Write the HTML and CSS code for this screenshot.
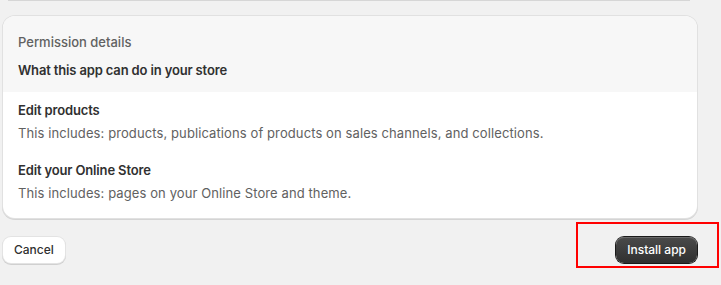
FILE: index.html
```html
<!DOCTYPE html>
<html lang="en">
<head>
    <meta charset="UTF-8">
    <meta name="viewport" content="width=device-width, initial-scale=1.0">
    <title>Install app</title>
    <link rel="stylesheet" href="styles.css">
</head>
<body>
  <div class="page">
    <div class="prev-card"></div>

    <section class="card">
      <header class="card-head">
        <p class="eyebrow">Permission details</p>
        <h2>What this app can do in your store</h2>
      </header>
      <div class="card-body">
        <div class="perm">
          <h3>Edit products</h3>
          <p>This includes: products, publications of products on sales channels, and collections.</p>
        </div>
        <div class="perm">
          <h3>Edit your Online Store</h3>
          <p>This includes: pages on your Online Store and theme.</p>
        </div>
      </div>
    </section>

    <div class="actions">
      <button class="btn">Cancel</button>
      <button class="btn btn-primary">Install app</button>
      <span class="highlight"></span>
    </div>
  </div>
</body>
</html>
```

FILE: styles.css
```css
html, body {
    margin: 0;
    background: #f1f1f1;
}

body {
    font-family: Inter, "Noto Sans", sans-serif;
    font-size: 13px;
    line-height: 20px;
    color: #303030;
    min-height: 285px;
}

.page {
    padding: 0 24px 22px 3px;
}

.prev-card {
    height: 1px;
    margin: 0 7px 0 5px;
    background: #d6d6d6;
}

.card {
    margin-top: 15px;
    background: #fff;
    border-radius: 12px;
    overflow: hidden;
    box-shadow: 0 0 0 1px #e1e1e1, 0 1px 0 1px #d4d4d4;
}

.card-head {
    background: #f7f7f7;
    padding: 16px 15px 12px;
}

.eyebrow {
    margin: 0 0 8px;
    color: #616161;
    font-weight: 500;
}

h2, h3 {
    margin: 0;
    font-size: 13px;
    font-weight: 600;
    letter-spacing: -0.15px;
    color: #303030;
}

.card-body {
    padding: 8px 15px 15px;
}

.perm p {
    margin: 3px 0 0;
    color: #616161;
    letter-spacing: 0.1px;
}

.perm + .perm {
    margin-top: 17px;
}

.actions {
    position: relative;
    display: flex;
    justify-content: space-between;
    align-items: center;
    margin-top: 19px;
}

.btn {
    font-family: inherit;
    font-size: 12px;
    font-weight: 500;
    line-height: 20px;
    padding: 3px 11px;
    border: none;
    border-radius: 8px;
    background: #fff;
    color: #303030;
    box-shadow: 0 0 0 1px #e3e3e3, 0 1px 0 1px #d0d0d0;
    cursor: pointer;
}

.btn-primary {
    background: linear-gradient(#4a4a4a, #303030);
    color: #fff;
    box-shadow: 0 0 0 1px #1a1a1a, inset 0 1px 0 #6a6a6a;
}

.highlight {
    position: absolute;
    right: -22px;
    top: -15px;
    width: 139px;
    height: 42px;
    border: 2px solid #f00;
}
```
